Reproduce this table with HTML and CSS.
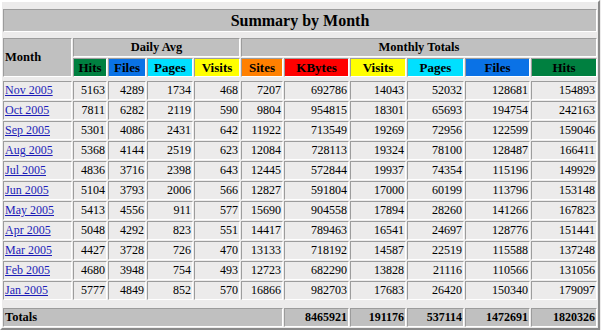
FILE: index.html
```html
<!DOCTYPE html>
<html>
<head>
<meta charset="utf-8">
<link rel="stylesheet" href="styles.css">
</head>
<body>
<div class="summary">
  <div class="sp sp5"></div>
  <div class="cell hd title">Summary by Month</div>
  <div class="sp sp4"></div>

  <div class="cell hd month-h">Month</div>
  <div class="cell hd group daily">Daily Avg</div>
  <div class="cell hd group monthly">Monthly Totals</div>

  <div class="cell hd c hits">Hits</div>
  <div class="cell hd c files">Files</div>
  <div class="cell hd c pages">Pages</div>
  <div class="cell hd c visits">Visits</div>
  <div class="cell hd c sites">Sites</div>
  <div class="cell hd c kbytes">KBytes</div>
  <div class="cell hd c visits">Visits</div>
  <div class="cell hd c pages">Pages</div>
  <div class="cell hd c files">Files</div>
  <div class="cell hd c hits">Hits</div>

  <div class="sp sp2"></div>

  <div class="cell m"><a href="#">Nov 2005</a></div><div class="cell n">5163</div><div class="cell n">4289</div><div class="cell n">1734</div><div class="cell n">468</div><div class="cell n">7207</div><div class="cell n">692786</div><div class="cell n">14043</div><div class="cell n">52032</div><div class="cell n">128681</div><div class="cell n">154893</div>
  <div class="cell m"><a href="#">Oct 2005</a></div><div class="cell n">7811</div><div class="cell n">6282</div><div class="cell n">2119</div><div class="cell n">590</div><div class="cell n">9804</div><div class="cell n">954815</div><div class="cell n">18301</div><div class="cell n">65693</div><div class="cell n">194754</div><div class="cell n">242163</div>
  <div class="cell m"><a href="#">Sep 2005</a></div><div class="cell n">5301</div><div class="cell n">4086</div><div class="cell n">2431</div><div class="cell n">642</div><div class="cell n">11922</div><div class="cell n">713549</div><div class="cell n">19269</div><div class="cell n">72956</div><div class="cell n">122599</div><div class="cell n">159046</div>
  <div class="cell m"><a href="#">Aug 2005</a></div><div class="cell n">5368</div><div class="cell n">4144</div><div class="cell n">2519</div><div class="cell n">623</div><div class="cell n">12084</div><div class="cell n">728113</div><div class="cell n">19324</div><div class="cell n">78100</div><div class="cell n">128487</div><div class="cell n">166411</div>
  <div class="cell m"><a href="#">Jul 2005</a></div><div class="cell n">4836</div><div class="cell n">3716</div><div class="cell n">2398</div><div class="cell n">643</div><div class="cell n">12445</div><div class="cell n">572844</div><div class="cell n">19937</div><div class="cell n">74354</div><div class="cell n">115196</div><div class="cell n">149929</div>
  <div class="cell m"><a href="#">Jun 2005</a></div><div class="cell n">5104</div><div class="cell n">3793</div><div class="cell n">2006</div><div class="cell n">566</div><div class="cell n">12827</div><div class="cell n">591804</div><div class="cell n">17000</div><div class="cell n">60199</div><div class="cell n">113796</div><div class="cell n">153148</div>
  <div class="cell m"><a href="#">May 2005</a></div><div class="cell n">5413</div><div class="cell n">4556</div><div class="cell n">911</div><div class="cell n">577</div><div class="cell n">15690</div><div class="cell n">904558</div><div class="cell n">17894</div><div class="cell n">28260</div><div class="cell n">141266</div><div class="cell n">167823</div>
  <div class="cell m"><a href="#">Apr 2005</a></div><div class="cell n">5048</div><div class="cell n">4292</div><div class="cell n">823</div><div class="cell n">551</div><div class="cell n">14417</div><div class="cell n">789463</div><div class="cell n">16541</div><div class="cell n">24697</div><div class="cell n">128776</div><div class="cell n">151441</div>
  <div class="cell m"><a href="#">Mar 2005</a></div><div class="cell n">4427</div><div class="cell n">3728</div><div class="cell n">726</div><div class="cell n">470</div><div class="cell n">13133</div><div class="cell n">718192</div><div class="cell n">14587</div><div class="cell n">22519</div><div class="cell n">115588</div><div class="cell n">137248</div>
  <div class="cell m"><a href="#">Feb 2005</a></div><div class="cell n">4680</div><div class="cell n">3948</div><div class="cell n">754</div><div class="cell n">493</div><div class="cell n">12723</div><div class="cell n">682290</div><div class="cell n">13828</div><div class="cell n">21116</div><div class="cell n">110566</div><div class="cell n">131056</div>
  <div class="cell m"><a href="#">Jan 2005</a></div><div class="cell n">5777</div><div class="cell n">4849</div><div class="cell n">852</div><div class="cell n">570</div><div class="cell n">16866</div><div class="cell n">982703</div><div class="cell n">17683</div><div class="cell n">26420</div><div class="cell n">150340</div><div class="cell n">179097</div>

  <div class="sp sp6"></div>

  <div class="cell hd totals-label">Totals</div>
  <div class="cell hd tn">8465921</div>
  <div class="cell hd tn">191176</div>
  <div class="cell hd tn">537114</div>
  <div class="cell hd tn">1472691</div>
  <div class="cell hd tn">1820326</div>
</div>
</body>
</html>
```
FILE: styles.css
```css
html, body {
  margin: 0;
  padding: 0;
  background: #ecebeb;
}

body {
  font-family: "Liberation Serif", "Times New Roman", serif;
  color: #000;
}

.summary {
  width: 600px;
  box-sizing: border-box;
  border: 2px solid;
  border-color: #ffffff #8a8a8a #8a8a8a #ffffff;
  padding: 1px;
  display: grid;
  grid-template-columns: 69px 34px 38px 46px 46px 42px 65px 56px 57px 65px 66px;
  gap: 1px;
}

.sp {
  grid-column: 1 / -1;
}
.sp5 { height: 5px; }
.sp4 { height: 4px; }
.sp2 { height: 2px; }
.sp6 { height: 6px; }

.cell {
  box-sizing: border-box;
  height: 19px;
  border: 1px solid;
  border-color: #9c9c9c #ffffff #ffffff #9c9c9c;
  padding: 0 1px;
  font-size: 12px;
  line-height: 17px;
  white-space: nowrap;
  overflow: hidden;
}

.hd {
  background: #c0c0c0;
  font-weight: bold;
}

.title {
  grid-column: 1 / -1;
  height: 23px;
  line-height: 21px;
  font-size: 16px;
  text-align: center;
}

.month-h {
  grid-row: span 2;
  height: auto;
  display: flex;
  align-items: center;
  padding-left: 1px;
  font-size: 12.5px;
}

.group {
  text-align: center;
  font-size: 12.5px;
}
.daily { grid-column: 2 / span 4; }
.monthly { grid-column: 6 / span 6; }

.c {
  text-align: center;
  font-size: 13px;
}
.hits { background: #008040; }
.files { background: #0a72e6; }
.pages { background: #00e0ff; }
.visits { background: #ffff00; }
.sites { background: #ff8000; }
.kbytes { background: #ff0000; }

.m a {
  color: #1c1cb8;
  text-decoration: underline;
}

.n {
  text-align: right;
}

.totals-label {
  grid-column: 1 / span 6;
  font-size: 12.5px;
}

.tn {
  text-align: right;
}
```
